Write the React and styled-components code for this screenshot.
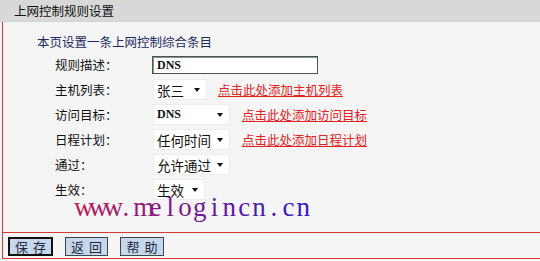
import React from "react";
import styled, { createGlobalStyle } from "styled-components";

const Global = createGlobalStyle`
  html, body { margin: 0; padding: 0; background: #f5f5f5; }
  body { font-family: "Noto Sans CJK SC", "Noto Sans", sans-serif; }
`;

const Page = styled.div`
  position: relative;
  width: 540px;
  height: 261px;
  overflow: hidden;
  background: #f5f5f5;
`;

const TitleBar = styled.div`
  height: 22px;
  line-height: 21px;
  padding-left: 14px;
  background: #d8d8d8;
  font-size: 12.5px;
  color: #111;
  border-bottom: 1px solid #d2d2d2;
  box-sizing: border-box;
`;

const Panel = styled.div`
  margin-left: 2px;
  height: 211px;
  box-sizing: border-box;
  border-left: 1px solid #d23a3a;
  border-bottom: 1px solid #d23a3a;
  padding: 10px 0 0 34px;
  display: flex;
  flex-direction: column;
`;

const Intro = styled.div`
  height: 20px;
  line-height: 20px;
  font-size: 12.5px;
  color: #1e2a5e;
`;

const Form = styled.div`
  display: flex;
  flex-direction: column;
  padding-left: 18px;
`;

const Row = styled.div`
  height: 25px;
  display: flex;
  align-items: center;
`;

const Label = styled.div`
  width: 97px;
  flex: none;
  font-size: 12.5px;
  color: #111;
`;

const TextInput = styled.div`
  width: 166px;
  height: 18px;
  box-sizing: border-box;
  background: #fff;
  border: 1px solid #4b5353;
  box-shadow: inset 1px 1px 0 #8a9292;
  padding-left: 4px;
  font-family: "Liberation Serif", serif;
  font-weight: bold;
  font-size: 12px;
  line-height: 16px;
  color: #111;
`;

const Select = styled.div`
  width: ${(p) => p.$w}px;
  height: 21px;
  margin-left: 1px;
  box-sizing: border-box;
  background: #fff;
  border: 1px solid #ececec;
  display: flex;
  align-items: center;
  justify-content: space-between;
  padding: 0 6px 0 3px;
  font-size: ${(p) => (p.$mono ? "12px" : "13.5px")};
  font-family: ${(p) =>
    p.$mono ? `"Liberation Serif", serif` : `"Noto Sans CJK SC", sans-serif`};
  font-weight: ${(p) => (p.$mono ? "bold" : "normal")};
  color: #111;
  flex: none;
`;

const Arrow = styled.span`
  width: 0;
  height: 0;
  border-left: 3.5px solid transparent;
  border-right: 3.5px solid transparent;
  border-top: 4px solid #111;
  margin-top: 1px;
`;

const AddLink = styled.a`
  margin-left: ${(p) => p.$gap}px;
  font-size: 12.5px;
  color: #e22222;
  text-decoration: underline;
  cursor: pointer;
`;

const ButtonBar = styled.div`
  margin-left: 2px;
  height: 26px;
  box-sizing: border-box;
  border-left: 1px solid #d23a3a;
  border-bottom: 1px solid #d23a3a;
  display: flex;
  align-items: center;
  gap: 12px;
  padding: 1px 0 0 5px;
`;

const Button = styled.button`
  width: ${(p) => p.$w || 44}px;
  height: 19px;
  box-sizing: border-box;
  padding: 0;
  background: #c6d7ec;
  border: ${(p) => (p.$focus ? "2px solid #111" : "1px solid #3c4650")};
  font-family: "Noto Sans CJK SC", sans-serif;
  font-size: 13px;
  line-height: 15px;
  letter-spacing: 5px;
  text-indent: 5px;
  color: #1c2a40;
`;

const Watermark = styled.div`
  position: absolute;
  left: 74px;
  top: 195px;
  display: flex;
  font-family: "Liberation Serif", "DejaVu Serif", serif;
  font-size: 27px;
  line-height: 25px;
  pointer-events: none;
`;

const WChar = styled.span`
  width: 14.8px;
  text-align: center;
  flex: none;
`;

const mark = "www.melogincn.cn";
const colorAt = (i, n) => {
  const t = i / (n - 1);
  const a = [181, 28, 92];
  const b = [52, 24, 196];
  const c = a.map((v, k) => Math.round(v + (b[k] - v) * t));
  return `rgb(${c[0]},${c[1]},${c[2]})`;
};

export default function App() {
  return (
    <Page>
      <Global />
      <TitleBar>上网控制规则设置</TitleBar>
      <Panel>
        <Intro>本页设置一条上网控制综合条目</Intro>
        <Form>
          <Row>
            <Label>规则描述：</Label>
            <TextInput>DNS</TextInput>
          </Row>
          <Row>
            <Label>主机列表：</Label>
            <Select $w={54}>
              张三
              <Arrow />
            </Select>
            <AddLink $gap={11}>点击此处添加主机列表</AddLink>
          </Row>
          <Row>
            <Label>访问目标：</Label>
            <Select $w={77} $mono>
              DNS
              <Arrow />
            </Select>
            <AddLink $gap={12}>点击此处添加访问目标</AddLink>
          </Row>
          <Row>
            <Label>日程计划：</Label>
            <Select $w={77}>
              任何时间
              <Arrow />
            </Select>
            <AddLink $gap={12}>点击此处添加日程计划</AddLink>
          </Row>
          <Row>
            <Label>通过：</Label>
            <Select $w={77}>
              允许通过
              <Arrow />
            </Select>
          </Row>
          <Row>
            <Label>生效：</Label>
            <Select $w={52}>
              生效
              <Arrow />
            </Select>
          </Row>
        </Form>
      </Panel>
      <ButtonBar>
        <Button $focus $w={45}>保存</Button>
        <Button $w={43}>返回</Button>
        <Button $w={44}>帮助</Button>
      </ButtonBar>
      <Watermark>
        {mark.split("").map((ch, i) => (
          <WChar key={i} style={{ color: colorAt(i, mark.length) }}>
            {ch}
          </WChar>
        ))}
      </Watermark>
    </Page>
  );
}
